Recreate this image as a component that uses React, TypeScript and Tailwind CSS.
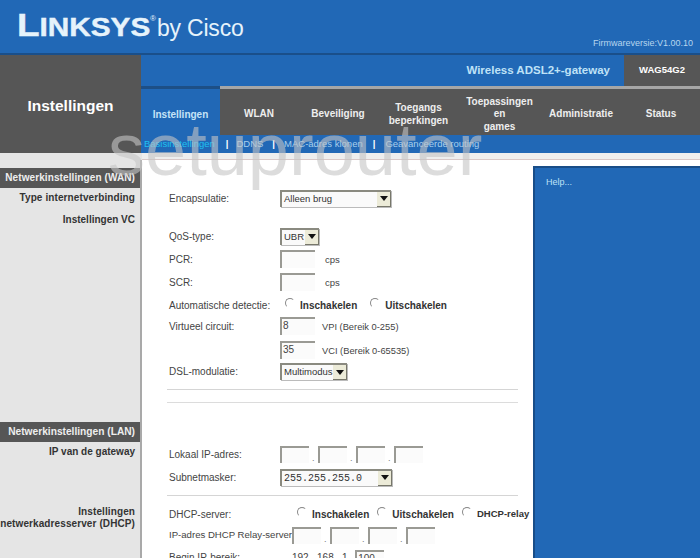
import React from "react";

const blue = "bg-[#2168b6]";

function Select({ w, text, mono }: { w: string; text: string; mono?: boolean }) {
  return (
    <div className={`${w} h-[17px] flex items-center justify-between border-t-2 border-l-2 border-t-[#8a8a80] border-l-[#8a8a80] bg-[#fafafa] pl-px shadow-[1px_1px_0_#bbb]`}>
      <span className={mono ? "font-['Liberation_Mono',monospace] text-[10px] text-[#333] pl-px" : "text-[9.5px] text-[#333] pl-px whitespace-nowrap"}>{text}</span>
      <span className="w-[14px] h-[15px] shrink-0 bg-[#ecebd8] border-r border-b border-[#77776a] flex items-center justify-center">
        <svg width="8" height="5" viewBox="0 0 8 5"><path d="M0 0h8L4 5z" fill="#111" /></svg>
      </span>
    </div>
  );
}

function Box({ w = "w-[35px]", h = "h-[18px]", value = "" }: { w?: string; h?: string; value?: string }) {
  return (
    <div className={`${w} ${h} shrink-0 border-t-2 border-l-2 border-t-[#9a9a94] border-l-[#9a9a94] bg-[#fbfbfb] text-[10px] leading-[14px] text-[#444] pl-px`}>
      {value}
    </div>
  );
}

function Radio({ label, small }: { label: string; small?: boolean }) {
  return (
    <span className="flex items-center gap-[5px]">
      <span className="w-[10px] h-[10px] -mt-[4px] rounded-full border border-t-[#888] border-l-[#888] border-r-white border-b-white" />
      <span className={`font-bold ${small ? "text-[9.5px]" : "text-[10px]"} text-[#333]`}>{label}</span>
    </span>
  );
}

function Ip() {
  return (
    <div className="flex items-end gap-[3px]">
      {[0, 1, 2, 3].map((i) => (
        <React.Fragment key={i}>
          {i > 0 && <span className="w-[3px] text-[9px] leading-[10px] text-[#777]">.</span>}
          <Box w="w-[29px]" h="h-[17px]" />
        </React.Fragment>
      ))}
    </div>
  );
}

function Row({ label, h, mt = "", children }: { label?: string; h: string; mt?: string; children?: React.ReactNode }) {
  return (
    <div className={`flex items-center ${h} ${mt}`}>
      <div className="w-[111px] shrink-0 text-[10px] text-[#444]">{label}</div>
      {children}
    </div>
  );
}

const tabs: [string, string][] = [
  ["WLAN", "w-[78px]"],
  ["Beveiliging", "w-[80px]"],
  ["Toegangs\nbeperkingen", "w-[81px]"],
  ["Toepassingen\nen\ngames", "w-[81px]"],
  ["Administratie", "w-[82px]"],
  ["Status", "flex-1"],
];

export default function App() {
  return (
    <div className="relative w-[700px] h-[558px] overflow-hidden bg-[#e5e5e5] font-['Liberation_Sans',Arial,sans-serif]">
      {/* Header */}
      <header className={`h-[55px] ${blue} border-b-2 border-[#1a4f8a] pl-[17px] pr-[7px] flex items-start justify-between`}>
        <div className="flex items-baseline mt-[10px] text-[#e6f3fb] leading-none">
          <span className="inline-block font-bold text-[31px] scale-x-[1.19] origin-left mr-[21px] [-webkit-text-stroke:0.4px_#e6f3fb]">
            L<span className="text-[25px]">INKSYS</span>
          </span>
          <span className="text-[8px] self-start mt-[5px]">®</span>
          <span className="text-[23px] tracking-[-0.2px] ml-[1px]">by Cisco</span>
        </div>
        <div className="text-[9px] text-[#b7d6ee] mt-[37px]">Firmwareversie:V1.00.10</div>
      </header>

      {/* Title block and navigation */}
      <div className="flex h-[98px]">
        <div className="w-[141px] shrink-0 bg-[#565656] text-white font-bold text-[15.5px] text-center pt-[39px]">Instellingen</div>
        <div className="flex-1 flex flex-col">
          <div className={`h-[31px] ${blue} flex items-stretch justify-end`}>
            <div className="flex items-center pr-[14px] text-[#bfe2f7] font-bold text-[11.5px]">Wireless ADSL2+-gateway</div>
            <div className="w-[76px] bg-[#565656] text-white font-bold text-[9.5px] flex items-center justify-center">WAG54G2</div>
          </div>
          <div className="h-[49px] flex">
            <div className={`w-[79px] ${blue} border-t-[3px] border-[#1d4f86] flex items-center justify-center text-[#c6e4f6] font-bold text-[10px] pt-[5px]`}>Instellingen</div>
            <div className="flex-1 flex bg-[#565656] border-t-[3px] border-[#a6a6a6]">
              {tabs.map(([t, w]) => (
                <div key={t} className={`${w} flex items-center justify-center text-center whitespace-pre-line text-[#eeeeee] font-bold text-[10px] leading-[12.5px] pt-[5px]`}>{t}</div>
              ))}
            </div>
          </div>
          <div className={`h-[18px] ${blue} flex items-center pl-[3px] pt-[1px] text-[9.5px] text-[#a8cfec]`}>
            <span className="text-[#1fc0f0]">Basisinstellingen</span>
            <span className="ml-[11px] mr-[8px] text-white font-bold">|</span>
            <span>DDNS</span>
            <span className="ml-[9px] mr-[9px] text-white font-bold">|</span>
            <span>MAC-adres klonen</span>
            <span className="ml-[10px] mr-[10px] text-white font-bold">|</span>
            <span>Geavanceerde routing</span>
          </div>
        </div>
      </div>

      {/* Body */}
      <div className="flex h-[405px]">
        <aside className="w-[140px] shrink-0 pt-[15px] text-right">
          <div className="h-[20px] bg-[#565656] text-[#eeeeee] font-bold text-[10px] leading-[20px] pr-[5px] tracking-[0.1px] whitespace-nowrap">Netwerkinstellingen (WAN)</div>
          <div className="mt-[3px] h-[14px] pr-[5px] font-bold text-[10px] leading-[14px] tracking-[0.1px] text-[#333]">Type internetverbinding</div>
          <div className="mt-[8px] h-[14px] pr-[5px] font-bold text-[10px] leading-[14px] text-[#333]">Instellingen VC</div>
          <div className="mt-[195px] h-[20px] bg-[#565656] text-[#eeeeee] font-bold text-[10.2px] leading-[20px] pr-[5px] whitespace-nowrap">Netwerkinstellingen (LAN)</div>
          <div className="mt-[3px] h-[14px] pr-[5px] font-bold text-[10px] leading-[14px] text-[#333]">IP van de gateway</div>
          <div className="mt-[47px] pr-[5px] font-bold text-[10px] leading-[12px] tracking-[0.1px] text-[#333] whitespace-nowrap">Instellingen<br />netwerkadresserver (DHCP)</div>
        </aside>
        <div className="w-[2px] bg-[#a9a9a9] mt-[7px]" />
        <div className="w-[391px] shrink-0 flex flex-col">
          <div className="h-[7px] bg-[#eeeeee] border-b border-[#d8c8c8]" />
          <main className="flex-1 bg-white pl-[27px] pr-[15px] overflow-hidden">
            <Row label="Encapsulatie:" h="h-[18px]" mt="mt-[29px]"><Select w="w-[111px]" text="Alleen brug" /></Row>
            <Row label="QoS-type:" h="h-[18px]" mt="mt-[20px]"><Select w="w-[39px]" text="UBR" /></Row>
            <Row label="PCR:" h="h-[18px]" mt="mt-[5px]"><Box /><span className="text-[9.5px] text-[#444] ml-[10px] mt-[3px]">cps</span></Row>
            <Row label="SCR:" h="h-[18px]" mt="mt-[5px]"><Box /><span className="text-[9.5px] text-[#444] ml-[10px] mt-[3px]">cps</span></Row>
            <Row label="Automatische detectie:" h="h-[16px]" mt="mt-[6px]">
              <span className="ml-[5px] flex gap-[13px]"><Radio label="Inschakelen" /><Radio label="Uitschakelen" /></span>
            </Row>
            <Row label="Virtueel circuit:" h="h-[18px]" mt="mt-[4px]"><Box value="8" /><span className="text-[9.3px] text-[#444] ml-[7px] mt-[3px]">VPI (Bereik 0-255)</span></Row>
            <Row h="h-[18px]" mt="mt-[6px]"><Box value="35" /><span className="text-[9.3px] text-[#444] ml-[7px] mt-[3px]">VCI (Bereik 0-65535)</span></Row>
            <Row label="DSL-modulatie:" h="h-[17px]" mt="mt-[4px]"><Select w="w-[67px]" text="Multimodus" /></Row>
            <div className="h-px bg-[#d5d5d5] mt-[9px] -ml-[2px]" />
            <div className="h-px bg-[#dcdcdc] mt-[12px] -ml-[2px]" />
            <Row label="Lokaal IP-adres:" h="h-[18px]" mt="mt-[42px]"><Ip /></Row>
            <Row label="Subnetmasker:" h="h-[18px]" mt="mt-[5px]"><Select w="w-[112px]" text="255.255.255.0" mono /></Row>
            <div className="h-px bg-[#d5d5d5] mt-[9px] -ml-[2px]" />
            <Row label="DHCP-server:" h="h-[16px]" mt="mt-[10px]">
              <span className="ml-[17px] flex gap-[8px] whitespace-nowrap"><Radio label="Inschakelen" /><Radio label="Uitschakelen" /><Radio label="DHCP-relay" small /></span>
            </Row>
            <div className="flex items-center h-[18px] mt-[4px]">
              <div className="w-[123px] shrink-0 text-[9.6px] text-[#444] whitespace-nowrap">IP-adres DHCP Relay-server:</div>
              <Ip />
            </div>
            <Row label="Begin IP-bereik:" h="h-[16px]" mt="mt-[5px]">
              <span className="ml-[12px] text-[10px] text-[#444] whitespace-pre">192 . 168 . 1 .</span>
              <span className="ml-[2px] mt-[2px]"><Box w="w-[29px]" h="h-[16px]" value="100" /></span>
            </Row>
          </main>
        </div>
        <div className="flex-1 flex flex-col">
          <div className="h-[7px] bg-[#eeeeee] border-b border-[#d8c8c8]" />
          <div className="h-[6px] bg-white" />
          <div className={`flex-1 ${blue} border-t-2 border-l-2 border-[#184d88] text-[9px] text-[#bfe2f7] pl-[11px] pt-[8px]`}>Help...</div>
        </div>
      </div>

      {/* Watermark */}
      <div className="absolute left-[108px] top-[107px] text-[74px] leading-[85px] text-[#c4c4c4]/60 pointer-events-none select-none">setuprouter</div>
    </div>
  );
}
